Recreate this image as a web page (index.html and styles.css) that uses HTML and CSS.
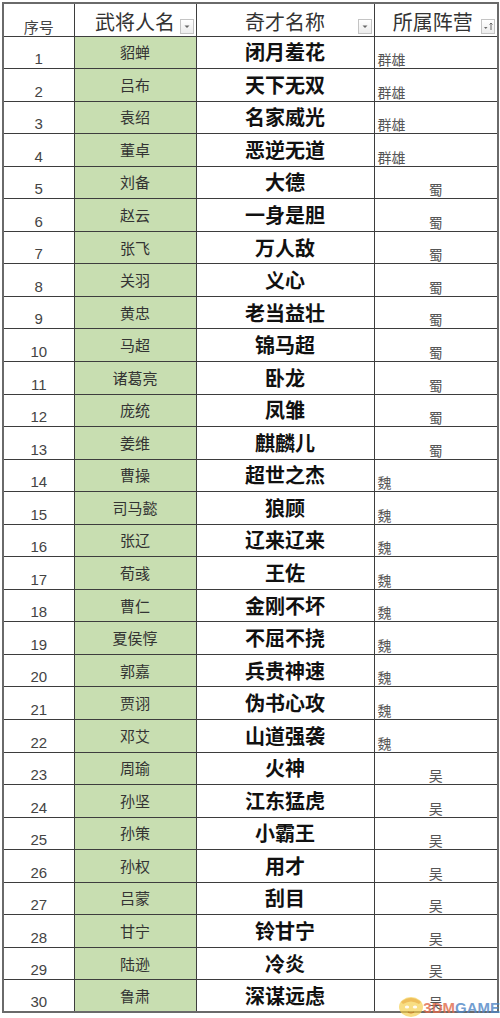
FILE: index.html
```html
<!DOCTYPE html>
<html lang="zh">
<head>
<meta charset="utf-8">
<title>奇才名称</title>
<link rel="stylesheet" href="styles.css">
</head>
<body>
<div class="page">
<table class="sheet">
<colgroup><col class="c1"><col class="c2"><col class="c3"><col class="c4"></colgroup>
<thead>
<tr>
<th class="h-no">序号</th>
<th class="h-f"><div class="hcell">武将人名<span class="dd"><svg width="12" height="13" viewBox="0 0 12 13"><path d="M3.5 5.5 L8.5 5.5 L6 8 Z" fill="#666"/></svg></span></div></th>
<th class="h-f"><div class="hcell">奇才名称<span class="dd"><svg width="12" height="13" viewBox="0 0 12 13"><path d="M3.5 5.5 L8.5 5.5 L6 8 Z" fill="#666"/></svg></span></div></th>
<th class="h-f"><div class="hcell last">所属阵营<span class="dd"><svg width="12" height="13" viewBox="0 0 12 13"><path d="M2 7 L5.5 7 L3.75 9 Z" fill="#666"/><path d="M9 10 L9 3 M7.5 4.5 L9 3 L10.5 4.5" stroke="#666" stroke-width="1" fill="none"/></svg></span></div></th>
</tr>
</thead>
<tbody id="rows">
<tr><td class="no">1</td><td class="name">貂蝉</td><td class="skill">闭月羞花</td><td class="camp left">群雄</td></tr>
<tr><td class="no">2</td><td class="name">吕布</td><td class="skill">天下无双</td><td class="camp left">群雄</td></tr>
<tr><td class="no">3</td><td class="name">袁绍</td><td class="skill">名家威光</td><td class="camp left">群雄</td></tr>
<tr><td class="no">4</td><td class="name">董卓</td><td class="skill">恶逆无道</td><td class="camp left">群雄</td></tr>
<tr><td class="no">5</td><td class="name">刘备</td><td class="skill">大德</td><td class="camp">蜀</td></tr>
<tr><td class="no">6</td><td class="name">赵云</td><td class="skill">一身是胆</td><td class="camp">蜀</td></tr>
<tr><td class="no">7</td><td class="name">张飞</td><td class="skill">万人敌</td><td class="camp">蜀</td></tr>
<tr><td class="no">8</td><td class="name">关羽</td><td class="skill">义心</td><td class="camp">蜀</td></tr>
<tr><td class="no">9</td><td class="name">黄忠</td><td class="skill">老当益壮</td><td class="camp">蜀</td></tr>
<tr><td class="no">10</td><td class="name">马超</td><td class="skill">锦马超</td><td class="camp">蜀</td></tr>
<tr><td class="no">11</td><td class="name">诸葛亮</td><td class="skill">卧龙</td><td class="camp">蜀</td></tr>
<tr><td class="no">12</td><td class="name">庞统</td><td class="skill">凤雏</td><td class="camp">蜀</td></tr>
<tr><td class="no">13</td><td class="name">姜维</td><td class="skill">麒麟儿</td><td class="camp">蜀</td></tr>
<tr><td class="no">14</td><td class="name">曹操</td><td class="skill">超世之杰</td><td class="camp left">魏</td></tr>
<tr><td class="no">15</td><td class="name">司马懿</td><td class="skill">狼顾</td><td class="camp left">魏</td></tr>
<tr><td class="no">16</td><td class="name">张辽</td><td class="skill">辽来辽来</td><td class="camp left">魏</td></tr>
<tr><td class="no">17</td><td class="name">荀彧</td><td class="skill">王佐</td><td class="camp left">魏</td></tr>
<tr><td class="no">18</td><td class="name">曹仁</td><td class="skill">金刚不坏</td><td class="camp left">魏</td></tr>
<tr><td class="no">19</td><td class="name">夏侯惇</td><td class="skill">不屈不挠</td><td class="camp left">魏</td></tr>
<tr><td class="no">20</td><td class="name">郭嘉</td><td class="skill">兵贵神速</td><td class="camp left">魏</td></tr>
<tr><td class="no">21</td><td class="name">贾诩</td><td class="skill">伪书心攻</td><td class="camp left">魏</td></tr>
<tr><td class="no">22</td><td class="name">邓艾</td><td class="skill">山道强袭</td><td class="camp left">魏</td></tr>
<tr><td class="no">23</td><td class="name">周瑜</td><td class="skill">火神</td><td class="camp">吴</td></tr>
<tr><td class="no">24</td><td class="name">孙坚</td><td class="skill">江东猛虎</td><td class="camp">吴</td></tr>
<tr><td class="no">25</td><td class="name">孙策</td><td class="skill">小霸王</td><td class="camp">吴</td></tr>
<tr><td class="no">26</td><td class="name">孙权</td><td class="skill">用才</td><td class="camp">吴</td></tr>
<tr><td class="no">27</td><td class="name">吕蒙</td><td class="skill">刮目</td><td class="camp">吴</td></tr>
<tr><td class="no">28</td><td class="name">甘宁</td><td class="skill">铃甘宁</td><td class="camp">吴</td></tr>
<tr><td class="no">29</td><td class="name">陆逊</td><td class="skill">冷炎</td><td class="camp">吴</td></tr>
<tr><td class="no">30</td><td class="name">鲁肃</td><td class="skill">深谋远虑</td><td class="camp">吴</td></tr>
</tbody>
</table>
<div class="watermark">
<svg class="chick" width="28" height="26" viewBox="0 0 28 26">
<ellipse cx="14" cy="15" rx="12" ry="10" fill="#f6cf4a" opacity="0.85"/>
<path d="M4 10 Q14 2 24 10 L22 12 Q14 7 6 12 Z" fill="#e8a82a" opacity="0.85"/>
<ellipse cx="10" cy="15" rx="2.2" ry="1.6" fill="#fff" opacity="0.9"/>
<ellipse cx="18" cy="15" rx="2.2" ry="1.6" fill="#fff" opacity="0.9"/>
<path d="M11 20 Q14 22 17 20" stroke="#d98a20" stroke-width="1.5" fill="none"/>
</svg>
<span class="wm-3dm">3DM</span><span class="wm-game">GAME</span>
</div>
</div>
</body>
</html>
```

FILE: styles.css
```css
html, body {
  margin: 0;
  padding: 0;
  background: #ffffff;
}

.page {
  position: relative;
  width: 500px;
  height: 1018px;
  padding: 2px 0 0 2px;
  box-sizing: border-box;
  font-family: "Noto Sans CJK SC", "Noto Sans", sans-serif;
}

.sheet {
  border-collapse: collapse;
  table-layout: fixed;
  width: 495px;
  border: 2px solid #6a6a6a;
}

.c1 { width: 71px; }
.c2 { width: 122px; }
.c3 { width: 178px; }
.c4 { width: 124px; }

.sheet th,
.sheet td {
  border: 1px solid #3d3d3d;
  padding: 0;
  overflow: hidden;
  white-space: nowrap;
}

.sheet thead tr {
  height: 33px;
}

.sheet tbody tr {
  height: 32.55px;
}

.h-no {
  font-weight: 400;
  font-size: 15px;
  color: #444;
  vertical-align: bottom;
  line-height: 18px;
}

.h-f {
  font-weight: 400;
  vertical-align: middle;
}

.hcell {
  position: relative;
  font-size: 20px;
  line-height: 26px;
  color: #333;
  text-align: center;
  padding-top: 4px;
}

.hcell.last {
  padding-right: 6px;
}

.dd {
  position: absolute;
  right: 2px;
  top: 14px;
  width: 14px;
  height: 15px;
  box-sizing: border-box;
  border: 1px solid #c4c4c4;
  background: linear-gradient(#ffffff, #ececec);
  display: flex;
  align-items: center;
  justify-content: center;
}

.no {
  text-align: center;
  vertical-align: bottom;
  font-family: "Liberation Sans", Arial, sans-serif;
  font-size: 15px;
  line-height: 18px;
  color: #444;
}

.name {
  background: #c8deb1;
  text-align: center;
  vertical-align: middle;
  font-size: 15px;
  line-height: 18px;
  color: #333;
  padding-top: 3px;
}

.skill {
  text-align: center;
  vertical-align: middle;
  font-size: 20px;
  font-weight: 700;
  line-height: 24px;
  color: #111;
  padding-top: 2px;
}

.camp {
  text-align: center;
  vertical-align: bottom;
  font-size: 14px;
  line-height: 18px;
  color: #555;
}

.camp.left {
  text-align: left;
  padding-left: 3px;
}

.watermark {
  position: absolute;
  right: 0;
  bottom: 2px;
  display: flex;
  align-items: flex-end;
  opacity: 0.8;
  font-family: "Liberation Sans", Arial, sans-serif;
  font-weight: 700;
  font-size: 15px;
  line-height: 16px;
}

.chick {
  margin-right: -2px;
  margin-bottom: -2px;
}

.wm-3dm {
  color: #e06a4a;
}

.wm-game {
  color: #4f86c6;
}
```
